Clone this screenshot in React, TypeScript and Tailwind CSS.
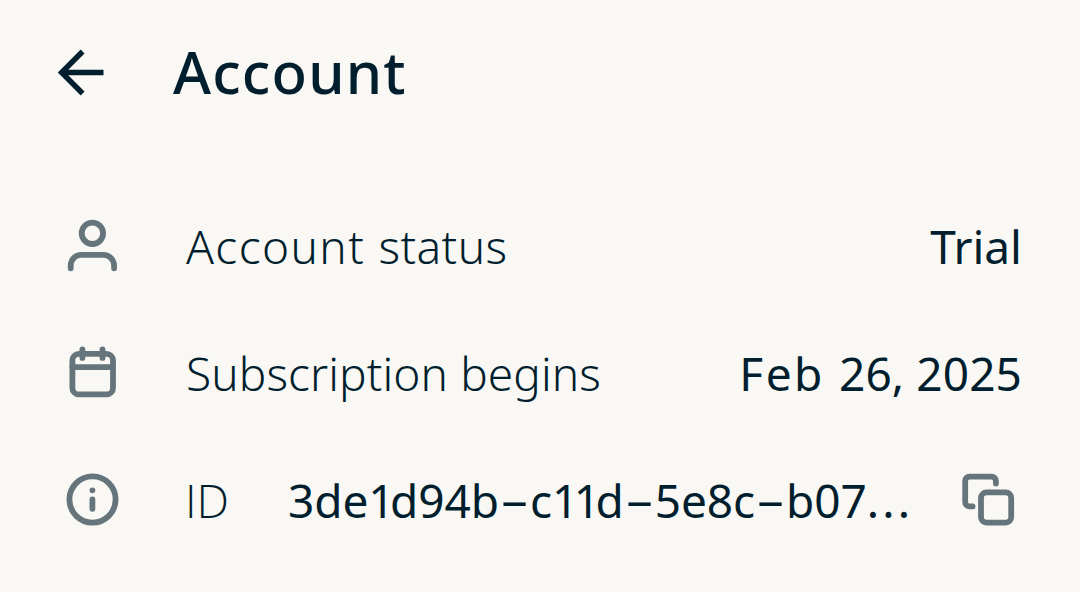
import type { ReactNode } from "react";

const ArrowIcon = () => (
  <svg
    className="w-[61px] h-[61px] shrink-0"
    viewBox="0 0 61 61"
    fill="none"
    stroke="currentColor"
    strokeWidth="5.4"
  >
    <path d="M32.6 9.5 11.6 30.5l21 21M12 30.5h41.5" />
  </svg>
);

const Icon = ({ children }: { children: ReactNode }) => (
  <svg
    className="w-[61px] h-[61px] shrink-0 text-[#66757c]"
    viewBox="0 0 61 61"
    fill="none"
    stroke="currentColor"
    strokeWidth="5.8"
    strokeLinecap="round"
    strokeLinejoin="round"
  >
    {children}
  </svg>
);

const UserIcon = () => (
  <Icon>
    <circle cx="30.4" cy="17.3" r="10.7" />
    <path d="M8.7 52.3v-2.5c0-6.2 4.6-11 10.6-11h22c6 0 10.8 4.8 10.8 11v2.5" />
  </Icon>
);

const CalendarIcon = () => (
  <Icon>
    <rect x="10.4" y="10.8" width="40.6" height="40.6" rx="6.5" />
    <path d="M10.4 24.2H51M20.4 6.3v8.6M40.5 6.3v8.6" />
  </Icon>
);

const InfoIcon = () => (
  <Icon>
    <circle cx="30.5" cy="29.5" r="23.1" />
    <path d="M30.4 29.5v9.3" />
    <circle cx="30.4" cy="20.3" r="2.9" fill="currentColor" stroke="none" />
  </Icon>
);

const CopyIcon = () => (
  <Icon>
    <rect x="24" y="22.4" width="30.2" height="30.2" rx="5.5" />
    <path d="M15.6 36.4h-3c-2.5 0-4.4-1.9-4.4-4.4V11c0-2.5 1.9-4.4 4.4-4.4h21.9c2.5 0 4.4 1.9 4.4 4.4v2.6" />
  </Icon>
);

const charStyles: Record<string, string> = {
  "-": "inline-block w-[31px] -translate-y-[2px] scale-x-[2] text-center tracking-normal",
  "1": "tracking-[-4.5px]",
  ".": "tracking-[3.2px]",
};

const AccountId = ({ value }: { value: string }) => (
  <span className="tracking-[-0.1px]">
    {value.split("").map((char, i) => (
      <span key={i} className={charStyles[char]}>
        {char}
      </span>
    ))}
  </span>
);

export default function App() {
  return (
    <div className="h-screen overflow-hidden bg-[#f9f8f4] font-['Noto_Sans',sans-serif] text-[#001e2e]">
      <header className="flex h-[145px] items-center pl-[50px]">
        <ArrowIcon />
        <h1 className="ml-[62px] pb-px text-[58px] leading-none font-medium tracking-[1.2px]">
          Account
        </h1>
      </header>

      <main className="mt-[38px] pl-[62px] text-[46px] leading-none whitespace-nowrap">
        <div className="flex h-[127px] items-center">
          <UserIcon />
          <span className="ml-[63px] pb-[2px] font-light tracking-[0.95px]">
            <span className="tracking-[1.4px]">Account </span>
            <span className="tracking-[0.4px]">status</span>
          </span>
          <span className="mr-[58px] ml-auto pb-[2px]">Trial</span>
        </div>

        <div className="flex h-[127px] items-center">
          <CalendarIcon />
          <span className="ml-[63px] pb-[2px] font-light tracking-[0.1px]">
            Subscription begins
          </span>
          <span className="mr-[58px] ml-auto pb-[2px]">
            <span className="tracking-[2.4px]">Feb </span>
            <span className="tracking-[0.1px]">26, 2025</span>
          </span>
        </div>

        <div className="flex h-[127px] items-center">
          <InfoIcon />
          <span className="ml-[62px] w-[103px] pb-[2px] font-['Open_Sans',sans-serif] font-light">
            ID
          </span>
          <div className="pb-[2px]">
            <AccountId value="3de1d94b-c11d-5e8c-b07..." />
          </div>
          <button className="mr-[62px] ml-auto">
            <CopyIcon />
          </button>
        </div>
      </main>
    </div>
  );
}
